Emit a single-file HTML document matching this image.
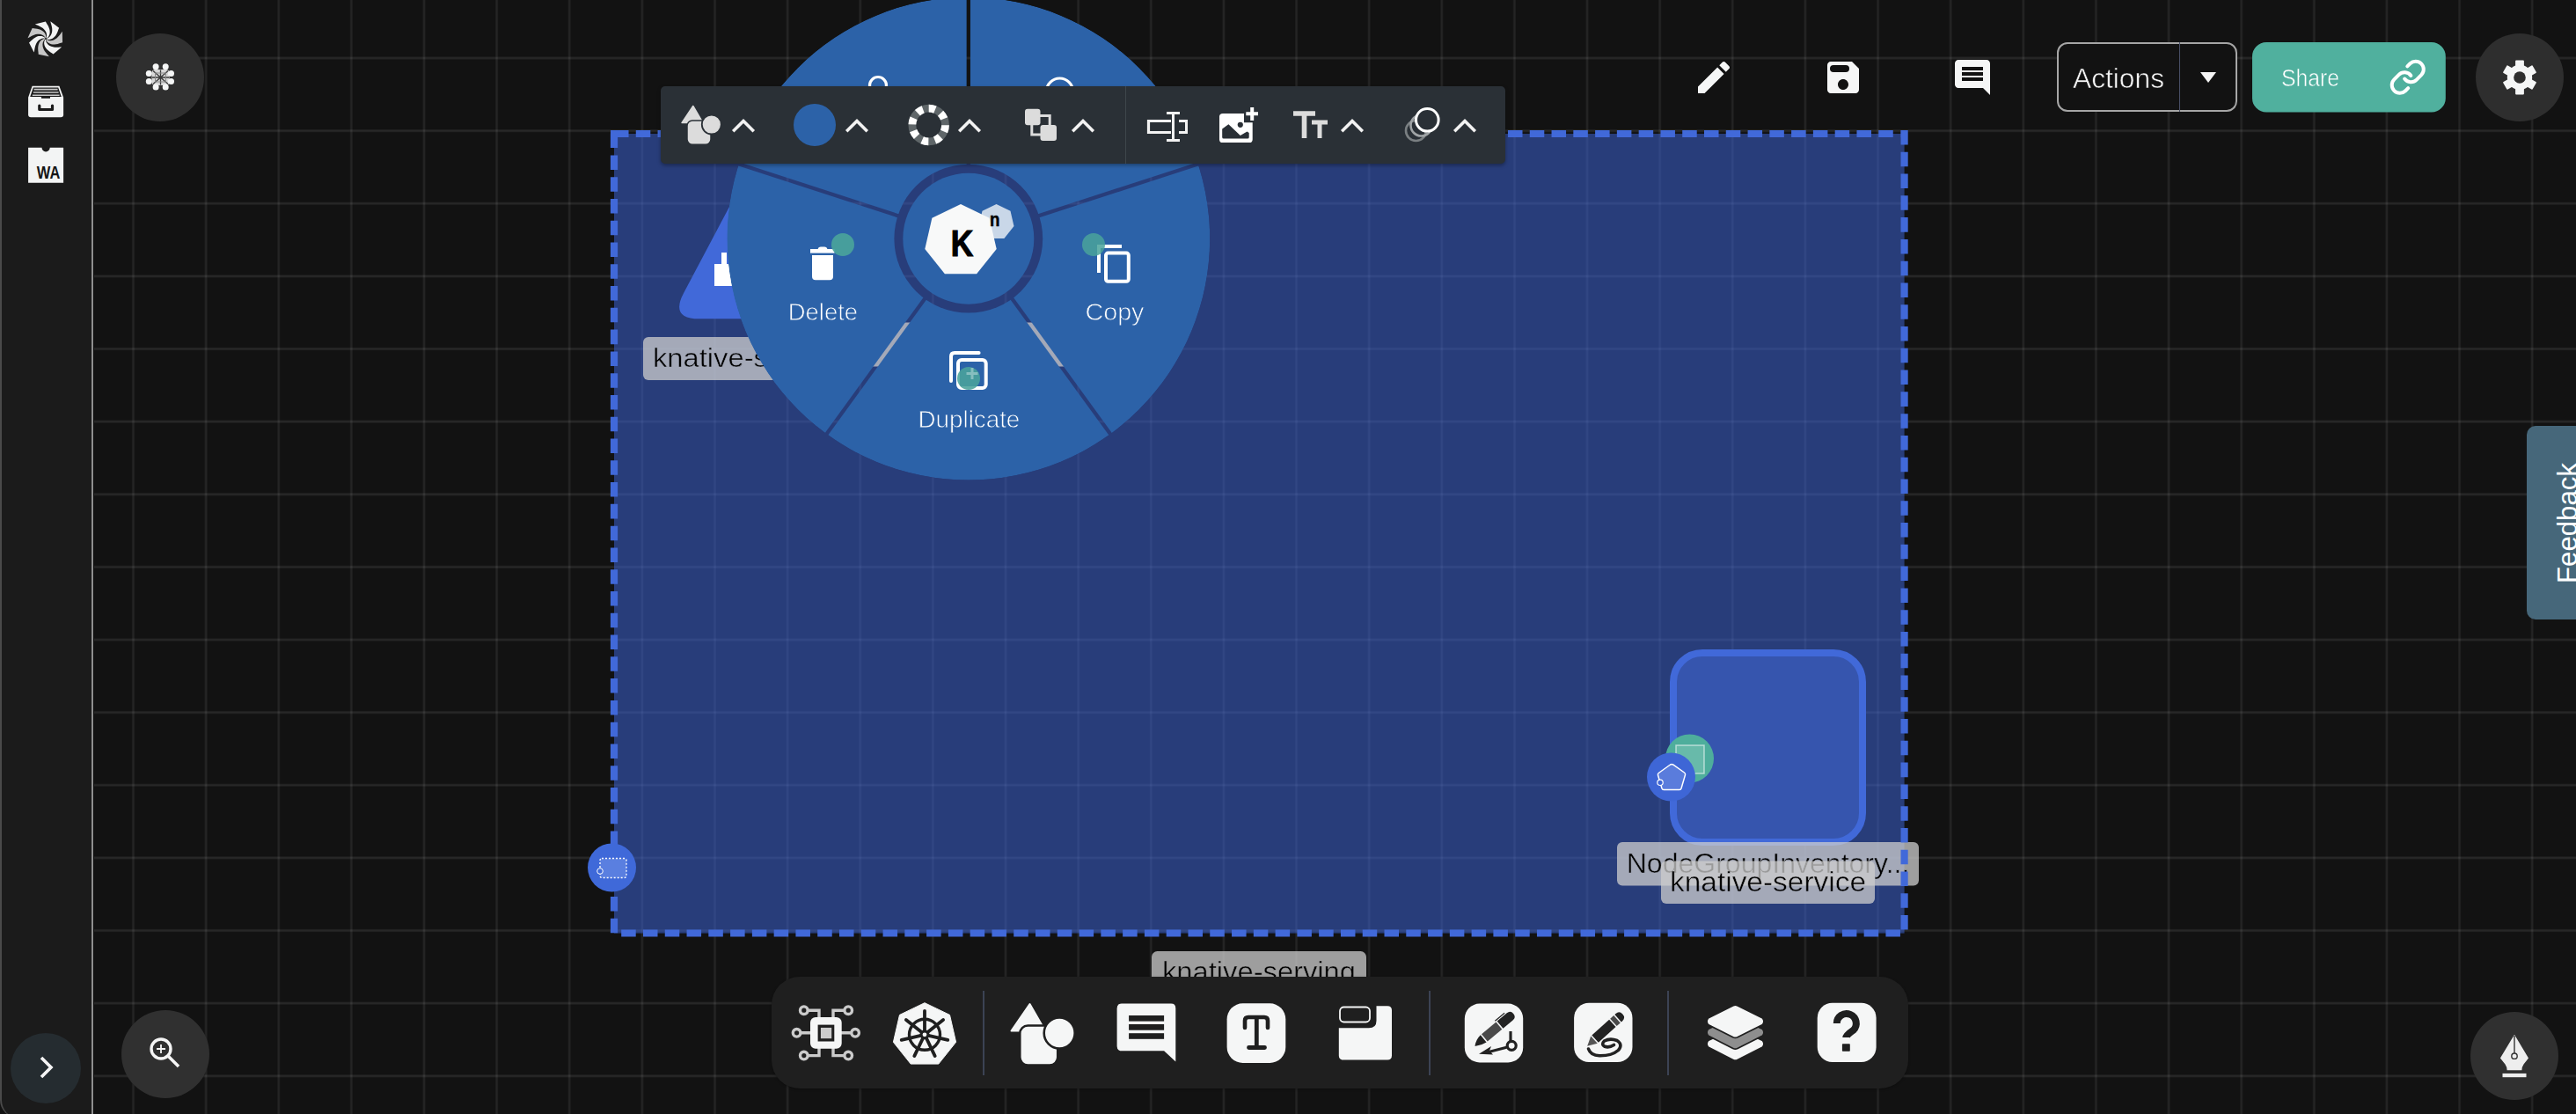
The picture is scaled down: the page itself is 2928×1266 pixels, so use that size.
<!DOCTYPE html>
<html><head><meta charset="utf-8">
<style>
html,body{margin:0;padding:0;}
body{width:2928px;height:1266px;overflow:hidden;background:#121212;position:relative;font-family:"Liberation Sans",sans-serif;}
.abs{position:absolute;}
svg{display:block;}
</style></head><body>
<svg class="abs" style="left:0;top:0" width="2928" height="1266"><g><rect x="67.17" y="0" width="3.4" height="1266" fill="rgba(255,255,255,0.045)"/><rect x="67.97" y="0" width="1.8" height="1266" fill="rgba(255,255,255,0.04)"/><rect x="149.80" y="0" width="3.4" height="1266" fill="rgba(255,255,255,0.045)"/><rect x="150.60" y="0" width="1.8" height="1266" fill="rgba(255,255,255,0.04)"/><rect x="232.42" y="0" width="3.4" height="1266" fill="rgba(255,255,255,0.045)"/><rect x="233.22" y="0" width="1.8" height="1266" fill="rgba(255,255,255,0.04)"/><rect x="315.05" y="0" width="3.4" height="1266" fill="rgba(255,255,255,0.045)"/><rect x="315.85" y="0" width="1.8" height="1266" fill="rgba(255,255,255,0.04)"/><rect x="397.68" y="0" width="3.4" height="1266" fill="rgba(255,255,255,0.045)"/><rect x="398.48" y="0" width="1.8" height="1266" fill="rgba(255,255,255,0.04)"/><rect x="480.31" y="0" width="3.4" height="1266" fill="rgba(255,255,255,0.045)"/><rect x="481.11" y="0" width="1.8" height="1266" fill="rgba(255,255,255,0.04)"/><rect x="562.93" y="0" width="3.4" height="1266" fill="rgba(255,255,255,0.045)"/><rect x="563.73" y="0" width="1.8" height="1266" fill="rgba(255,255,255,0.04)"/><rect x="645.56" y="0" width="3.4" height="1266" fill="rgba(255,255,255,0.045)"/><rect x="646.36" y="0" width="1.8" height="1266" fill="rgba(255,255,255,0.04)"/><rect x="728.19" y="0" width="3.4" height="1266" fill="rgba(255,255,255,0.045)"/><rect x="728.99" y="0" width="1.8" height="1266" fill="rgba(255,255,255,0.04)"/><rect x="810.81" y="0" width="3.4" height="1266" fill="rgba(255,255,255,0.045)"/><rect x="811.61" y="0" width="1.8" height="1266" fill="rgba(255,255,255,0.04)"/><rect x="893.44" y="0" width="3.4" height="1266" fill="rgba(255,255,255,0.045)"/><rect x="894.24" y="0" width="1.8" height="1266" fill="rgba(255,255,255,0.04)"/><rect x="976.07" y="0" width="3.4" height="1266" fill="rgba(255,255,255,0.045)"/><rect x="976.87" y="0" width="1.8" height="1266" fill="rgba(255,255,255,0.04)"/><rect x="1058.69" y="0" width="3.4" height="1266" fill="rgba(255,255,255,0.045)"/><rect x="1059.49" y="0" width="1.8" height="1266" fill="rgba(255,255,255,0.04)"/><rect x="1141.32" y="0" width="3.4" height="1266" fill="rgba(255,255,255,0.045)"/><rect x="1142.12" y="0" width="1.8" height="1266" fill="rgba(255,255,255,0.04)"/><rect x="1223.95" y="0" width="3.4" height="1266" fill="rgba(255,255,255,0.045)"/><rect x="1224.75" y="0" width="1.8" height="1266" fill="rgba(255,255,255,0.04)"/><rect x="1306.58" y="0" width="3.4" height="1266" fill="rgba(255,255,255,0.045)"/><rect x="1307.38" y="0" width="1.8" height="1266" fill="rgba(255,255,255,0.04)"/><rect x="1389.20" y="0" width="3.4" height="1266" fill="rgba(255,255,255,0.045)"/><rect x="1390.00" y="0" width="1.8" height="1266" fill="rgba(255,255,255,0.04)"/><rect x="1471.83" y="0" width="3.4" height="1266" fill="rgba(255,255,255,0.045)"/><rect x="1472.63" y="0" width="1.8" height="1266" fill="rgba(255,255,255,0.04)"/><rect x="1554.46" y="0" width="3.4" height="1266" fill="rgba(255,255,255,0.045)"/><rect x="1555.26" y="0" width="1.8" height="1266" fill="rgba(255,255,255,0.04)"/><rect x="1637.08" y="0" width="3.4" height="1266" fill="rgba(255,255,255,0.045)"/><rect x="1637.88" y="0" width="1.8" height="1266" fill="rgba(255,255,255,0.04)"/><rect x="1719.71" y="0" width="3.4" height="1266" fill="rgba(255,255,255,0.045)"/><rect x="1720.51" y="0" width="1.8" height="1266" fill="rgba(255,255,255,0.04)"/><rect x="1802.34" y="0" width="3.4" height="1266" fill="rgba(255,255,255,0.045)"/><rect x="1803.14" y="0" width="1.8" height="1266" fill="rgba(255,255,255,0.04)"/><rect x="1884.96" y="0" width="3.4" height="1266" fill="rgba(255,255,255,0.045)"/><rect x="1885.76" y="0" width="1.8" height="1266" fill="rgba(255,255,255,0.04)"/><rect x="1967.59" y="0" width="3.4" height="1266" fill="rgba(255,255,255,0.045)"/><rect x="1968.39" y="0" width="1.8" height="1266" fill="rgba(255,255,255,0.04)"/><rect x="2050.22" y="0" width="3.4" height="1266" fill="rgba(255,255,255,0.045)"/><rect x="2051.02" y="0" width="1.8" height="1266" fill="rgba(255,255,255,0.04)"/><rect x="2132.84" y="0" width="3.4" height="1266" fill="rgba(255,255,255,0.045)"/><rect x="2133.64" y="0" width="1.8" height="1266" fill="rgba(255,255,255,0.04)"/><rect x="2215.47" y="0" width="3.4" height="1266" fill="rgba(255,255,255,0.045)"/><rect x="2216.27" y="0" width="1.8" height="1266" fill="rgba(255,255,255,0.04)"/><rect x="2298.10" y="0" width="3.4" height="1266" fill="rgba(255,255,255,0.045)"/><rect x="2298.90" y="0" width="1.8" height="1266" fill="rgba(255,255,255,0.04)"/><rect x="2380.73" y="0" width="3.4" height="1266" fill="rgba(255,255,255,0.045)"/><rect x="2381.53" y="0" width="1.8" height="1266" fill="rgba(255,255,255,0.04)"/><rect x="2463.35" y="0" width="3.4" height="1266" fill="rgba(255,255,255,0.045)"/><rect x="2464.15" y="0" width="1.8" height="1266" fill="rgba(255,255,255,0.04)"/><rect x="2545.98" y="0" width="3.4" height="1266" fill="rgba(255,255,255,0.045)"/><rect x="2546.78" y="0" width="1.8" height="1266" fill="rgba(255,255,255,0.04)"/><rect x="2628.61" y="0" width="3.4" height="1266" fill="rgba(255,255,255,0.045)"/><rect x="2629.41" y="0" width="1.8" height="1266" fill="rgba(255,255,255,0.04)"/><rect x="2711.23" y="0" width="3.4" height="1266" fill="rgba(255,255,255,0.045)"/><rect x="2712.03" y="0" width="1.8" height="1266" fill="rgba(255,255,255,0.04)"/><rect x="2793.86" y="0" width="3.4" height="1266" fill="rgba(255,255,255,0.045)"/><rect x="2794.66" y="0" width="1.8" height="1266" fill="rgba(255,255,255,0.04)"/><rect x="2876.49" y="0" width="3.4" height="1266" fill="rgba(255,255,255,0.045)"/><rect x="2877.29" y="0" width="1.8" height="1266" fill="rgba(255,255,255,0.04)"/><rect x="0" y="64.30" width="2928" height="3.4" fill="rgba(255,255,255,0.05)"/><rect x="0" y="65.10" width="2928" height="1.8" fill="rgba(255,255,255,0.045)"/><rect x="0" y="146.93" width="2928" height="3.4" fill="rgba(255,255,255,0.05)"/><rect x="0" y="147.73" width="2928" height="1.8" fill="rgba(255,255,255,0.045)"/><rect x="0" y="229.55" width="2928" height="3.4" fill="rgba(255,255,255,0.05)"/><rect x="0" y="230.35" width="2928" height="1.8" fill="rgba(255,255,255,0.045)"/><rect x="0" y="312.18" width="2928" height="3.4" fill="rgba(255,255,255,0.05)"/><rect x="0" y="312.98" width="2928" height="1.8" fill="rgba(255,255,255,0.045)"/><rect x="0" y="394.81" width="2928" height="3.4" fill="rgba(255,255,255,0.05)"/><rect x="0" y="395.61" width="2928" height="1.8" fill="rgba(255,255,255,0.045)"/><rect x="0" y="477.44" width="2928" height="3.4" fill="rgba(255,255,255,0.05)"/><rect x="0" y="478.24" width="2928" height="1.8" fill="rgba(255,255,255,0.045)"/><rect x="0" y="560.06" width="2928" height="3.4" fill="rgba(255,255,255,0.05)"/><rect x="0" y="560.86" width="2928" height="1.8" fill="rgba(255,255,255,0.045)"/><rect x="0" y="642.69" width="2928" height="3.4" fill="rgba(255,255,255,0.05)"/><rect x="0" y="643.49" width="2928" height="1.8" fill="rgba(255,255,255,0.045)"/><rect x="0" y="725.32" width="2928" height="3.4" fill="rgba(255,255,255,0.05)"/><rect x="0" y="726.12" width="2928" height="1.8" fill="rgba(255,255,255,0.045)"/><rect x="0" y="807.94" width="2928" height="3.4" fill="rgba(255,255,255,0.05)"/><rect x="0" y="808.74" width="2928" height="1.8" fill="rgba(255,255,255,0.045)"/><rect x="0" y="890.57" width="2928" height="3.4" fill="rgba(255,255,255,0.05)"/><rect x="0" y="891.37" width="2928" height="1.8" fill="rgba(255,255,255,0.045)"/><rect x="0" y="973.20" width="2928" height="3.4" fill="rgba(255,255,255,0.05)"/><rect x="0" y="974.00" width="2928" height="1.8" fill="rgba(255,255,255,0.045)"/><rect x="0" y="1055.82" width="2928" height="3.4" fill="rgba(255,255,255,0.05)"/><rect x="0" y="1056.62" width="2928" height="1.8" fill="rgba(255,255,255,0.045)"/><rect x="0" y="1138.45" width="2928" height="3.4" fill="rgba(255,255,255,0.05)"/><rect x="0" y="1139.25" width="2928" height="1.8" fill="rgba(255,255,255,0.045)"/><rect x="0" y="1221.08" width="2928" height="3.4" fill="rgba(255,255,255,0.05)"/><rect x="0" y="1221.88" width="2928" height="1.8" fill="rgba(255,255,255,0.045)"/></g></svg>

<div class="abs" style="left:0;top:0;width:102px;height:1270px;background:#1b1b1b;border-left:2px solid #4a4a4a;border-right:2px solid #8f8f8f;border-bottom-left-radius:20px;box-sizing:content-box;"></div>
<div class="abs" style="left:106px;top:0;width:1px;height:1266px;background:#0c0c0c"></div>
<svg class="abs" style="left:0;top:0" width="106" height="80"><path d="M52.99,43.84 L54.52,43.27 L55.91,42.34 L57.10,41.09 L58.06,39.58 L58.75,37.86 L59.16,35.98 L59.29,34.00 L59.17,31.97 L58.82,29.94 L58.30,27.94 L57.71,26.01 L57.31,24.20 L67.15,31.73 L66.46,33.34 L65.83,35.16 L65.12,36.99 L64.25,38.75 L63.22,40.38 L62.02,41.83 L60.66,43.04 L59.17,43.99 L57.59,44.62 L55.98,44.92 L54.39,44.86 L52.89,44.45Z" fill="#f2f3f3"/><path d="M52.74,44.67 L54.14,45.52 L55.74,46.02 L57.46,46.18 L59.23,45.98 L61.01,45.45 L62.73,44.60 L64.36,43.47 L65.87,42.11 L67.24,40.56 L68.48,38.91 L69.63,37.25 L70.79,35.80 L71.04,48.20 L69.34,48.66 L67.54,49.30 L65.66,49.88 L63.75,50.31 L61.83,50.52 L59.94,50.48 L58.14,50.17 L56.48,49.59 L55.00,48.76 L53.76,47.68 L52.82,46.41 L52.20,44.98Z" fill="#c6c6c6"/><path d="M51.93,45.00 L52.15,46.62 L52.75,48.18 L53.70,49.62 L54.96,50.89 L56.49,51.95 L58.22,52.76 L60.12,53.34 L62.13,53.66 L64.19,53.77 L66.25,53.71 L68.27,53.57 L70.12,53.58 L60.59,61.51 L59.17,60.46 L57.54,59.45 L55.92,58.35 L54.39,57.12 L53.03,55.75 L51.89,54.25 L51.01,52.65 L50.42,50.99 L50.15,49.31 L50.22,47.67 L50.63,46.14 L51.36,44.77Z" fill="#f2f3f3"/><path d="M51.18,44.57 L50.05,45.75 L49.20,47.19 L48.66,48.83 L48.46,50.61 L48.58,52.46 L49.03,54.33 L49.77,56.17 L50.76,57.94 L51.96,59.62 L53.29,61.20 L54.66,62.69 L55.81,64.14 L43.67,61.63 L43.60,59.87 L43.37,57.97 L43.22,56.01 L43.24,54.05 L43.46,52.13 L43.92,50.30 L44.62,48.62 L45.55,47.12 L46.69,45.87 L48.02,44.90 L49.47,44.26 L51.00,43.98Z" fill="#c6c6c6"/><path d="M51.04,43.71 L49.41,43.56 L47.75,43.80 L46.14,44.41 L44.62,45.35 L43.25,46.61 L42.07,48.12 L41.09,49.84 L40.32,51.72 L39.76,53.71 L39.36,55.74 L39.05,57.73 L38.63,59.54 L33.02,48.48 L34.35,47.33 L35.70,45.96 L37.14,44.63 L38.68,43.42 L40.32,42.39 L42.03,41.61 L43.79,41.11 L45.54,40.90 L47.23,41.02 L48.81,41.45 L50.22,42.19 L51.39,43.21Z" fill="#f2f3f3"/><path d="M51.63,43.07 L50.73,41.70 L49.51,40.56 L48.03,39.67 L46.34,39.08 L44.51,38.79 L42.59,38.80 L40.63,39.11 L38.68,39.69 L36.78,40.48 L34.94,41.43 L33.19,42.44 L31.51,43.23 L36.66,31.96 L38.40,32.28 L40.30,32.48 L42.24,32.77 L44.15,33.22 L45.97,33.87 L47.65,34.72 L49.14,35.77 L50.39,37.02 L51.36,38.41 L52.01,39.92 L52.31,41.48 L52.24,43.03Z" fill="#c6c6c6"/><path d="M52.49,43.13 L53.00,41.57 L53.14,39.91 L52.91,38.20 L52.32,36.51 L51.41,34.89 L50.19,33.40 L48.73,32.06 L47.07,30.90 L45.26,29.90 L43.37,29.06 L41.49,28.32 L39.83,27.51 L51.85,24.50 L52.68,26.05 L53.71,27.67 L54.70,29.37 L55.53,31.14 L56.17,32.97 L56.55,34.81 L56.65,36.64 L56.46,38.39 L55.97,40.02 L55.20,41.46 L54.17,42.67 L52.91,43.58Z" fill="#f2f3f3"/></svg>
<svg class="abs" style="left:0;top:0" width="106" height="220" viewBox="0 0 106 220">
  <path d="M36.6,97.8 H67.4 L72.1,110.8 V130.3 Q72.1,133.3 69.1,133.3 H35.1 Q32.1,133.3 32.1,130.3 V110.8 Z" fill="#f3f4f4"/>
  <path d="M37.8,99.5 H66.2 L69.8,110 H34.2 Z" fill="#1b1b1b"/>
  <path d="M38.6,101.6 H65.6 M37.8,105 H66.6 M36.8,108.2 H67.6" stroke="#c8c8c8" stroke-width="1.6"/>
  <rect x="47" y="110" width="10" height="1.8" fill="#1b1b1b"/>
  <path d="M44.8,120 V124.5 H59.5 V120" fill="none" stroke="#1b1b1b" stroke-width="3.2" stroke-linecap="round" stroke-linejoin="round"/>
  <path d="M32.1,167.8 H47.5 A4.6,4.6 0 0 0 56.7,167.8 H72.1 V207.8 H32.1 Z" fill="#f3f4f4"/>
  <text x="41.8" y="202.7" font-family="Liberation Sans" font-weight="bold" font-size="19.4" fill="#151515" textLength="26.5" lengthAdjust="spacingAndGlyphs">WA</text>
</svg>
<div class="abs" style="left:132px;top:38px;width:100px;height:100px;border-radius:50%;background:#2f2f2f"></div>
<svg class="abs" style="left:0;top:0" width="240" height="140" viewBox="0 0 240 140">
  <rect x="172.5" y="79" width="20" height="18" rx="4" fill="#d8d8d8"/>
  <path d="M174,80.5 L191,95.5 M191,80.5 L174,95.5 M182.5,79.5 V96.5 M173,88 H192" stroke="#3a3a3a" stroke-width="1.3"/>
  <rect x="176.5" y="83" width="12" height="10" fill="none" stroke="#888" stroke-width="1"/>
  <g fill="#f5f6f6">
    <circle cx="177.1" cy="75.8" r="3.5"/><circle cx="188.2" cy="75.8" r="3.5"/>
    <circle cx="169.3" cy="83.4" r="3.5"/><circle cx="194.5" cy="83.4" r="3.5"/>
    <circle cx="169.3" cy="92.4" r="3.5"/><circle cx="194.5" cy="92.4" r="3.5"/>
    <circle cx="177.1" cy="98.9" r="3.5"/><circle cx="188.2" cy="98.9" r="3.5"/>
  </g>
</svg>
<div class="abs" style="left:12px;top:1174px;width:80px;height:80px;border-radius:50%;background:#252c30"></div>
<svg class="abs" style="left:40px;top:1198px" width="26" height="32" viewBox="0 0 26 32">
  <path d="M7,4 L18,15 L7,26" stroke="#f5f5f5" stroke-width="3.6" fill="none" stroke-linecap="butt"/>
</svg>
<div class="abs" style="left:138px;top:1148px;width:100px;height:100px;border-radius:50%;background:#303030"></div>
<svg class="abs" style="left:166px;top:1176px" width="44" height="44" viewBox="0 0 44 44">
  <circle cx="17" cy="16" r="11" stroke="#f5f5f5" stroke-width="3.4" fill="none"/>
  <path d="M25,24 L37,36" stroke="#f5f5f5" stroke-width="3.6" stroke-linecap="butt"/>
  <path d="M17,11 L17,21 M12,16 L22,16" stroke="#f5f5f5" stroke-width="1.8"/>
</svg>
<svg class="abs" style="left:0;top:0" width="2928" height="1266" viewBox="0 0 2928 1266" font-family="Liberation Sans">
  <!-- selection group -->
  <rect x="698" y="152" width="1466.6" height="908.6" fill="rgba(62,104,226,0.5)"/>
  <!-- triangle node -->
  <path d="M841.9,210.7 Q856.0,184.0 870.1,210.7 L934.9,332.9 Q950.5,362.3 917.3,362.3 L794.7,362.3 Q761.5,362.3 777.1,332.9 Z" fill="#4169d9"/>
  <path d="M812,300 L820,300 L820,287 L826,287 L826,300 L840,300 L840,325 L812,325 Z" fill="#ffffff"/>
  <rect x="731" y="383" width="244" height="49" rx="6" fill="rgba(205,205,205,0.75)"/>
  <mask id="20tm1" maskUnits="userSpaceOnUse" x="736.0" y="385.9" width="232.0" height="42.0"><text x="742" y="417.4" font-size="30" fill="#fff" textLength="220" lengthAdjust="spacingAndGlyphs" stroke="#000" stroke-width="0.6" font-family="Liberation Sans">knative-serving</text></mask><rect x="736.0" y="385.9" width="232.0" height="42.0" fill="#000" mask="url(#20tm1)"/>
  <!-- gray bits seen through pie gaps -->
  <rect x="985" y="366.5" width="235" height="50" fill="rgba(205,205,205,0.75)"/>
  <!-- node rect -->
  <rect x="1902" y="742" width="215" height="215" rx="33" fill="#3655ae" stroke="#4169d9" stroke-width="8"/>
  <circle cx="1920.5" cy="862" r="27.5" fill="#4eae9c"/>
  <rect x="1905" y="847" width="32" height="32" fill="rgba(255,255,255,0.15)" stroke="rgba(255,255,255,0.55)" stroke-width="1.5"/>
  <circle cx="1899.5" cy="883" r="27.5" fill="#3e66d6"/>
  <path d="M1898.5,869 Q1900.1,868 1901.7,869 L1914.5,878 Q1915.9,879 1915.5,880.6 L1911,896 Q1910.5,897.5 1909,897.5 L1891,897.5 Q1889.6,897.5 1889,896 L1884.5,881 Q1884,879.5 1885.3,878.5 Z" fill="rgba(255,255,255,0.15)" stroke="#ffffff" stroke-width="1.5"/>
  <circle cx="1887" cy="889.3" r="3.2" fill="#3e66d6" stroke="#fff" stroke-width="1.2"/>
  <rect x="1838" y="957" width="343" height="49.6" rx="6" fill="rgba(205,205,205,0.75)"/>
  <mask id="20tm2" maskUnits="userSpaceOnUse" x="1842.7" y="959.0" width="333.7" height="43.4"><text x="1848.7" y="991.5" font-size="31" fill="#fff" textLength="321.7" lengthAdjust="spacingAndGlyphs" stroke="#000" stroke-width="0.6" font-family="Liberation Sans">NodeGroupInventory...</text></mask><rect x="1842.7" y="959.0" width="333.7" height="43.4" fill="#000" mask="url(#20tm2)"/>
  <rect x="1888" y="978.5" width="243" height="48.5" rx="6" fill="rgba(205,205,205,0.75)"/>
  <mask id="20tm3" maskUnits="userSpaceOnUse" x="1892.0" y="980.0" width="235.0" height="43.4"><text x="1898" y="1012.5" font-size="31" fill="#fff" textLength="223" lengthAdjust="spacingAndGlyphs" stroke="#000" stroke-width="0.6" font-family="Liberation Sans">knative-service</text></mask><rect x="1892.0" y="980.0" width="235.0" height="43.4" fill="#000" mask="url(#20tm3)"/>
  <!-- selection border -->
  <g stroke="#4169d9" stroke-width="8.2" stroke-dasharray="16.52 8.26" fill="none">
    <path d="M698,152 H2160.3"/>
    <path d="M2164.6,148 V1060.6"/>
    <path d="M706.2,1060.5 H2160.3"/>
    <path d="M698,151.6 V1060.8"/>
  </g>
  <rect x="694" y="148" width="8" height="4" fill="#4169d9"/>
  <!-- small node on left border -->
  <circle cx="695.5" cy="986" r="27.5" fill="#3f69d9"/>
  <rect x="682" y="975.5" width="30" height="22" rx="2" fill="#5a7fe0" stroke="#fff" stroke-width="1.3" stroke-dasharray="2 2"/>
  <circle cx="682" cy="990" r="3.3" fill="#3f69d9" stroke="#fff" stroke-width="1"/>
  <!-- bottom label -->
  <rect x="1309" y="1081" width="244" height="60" rx="6.5" fill="rgba(205,205,205,0.75)"/>
  <mask id="20tm4" maskUnits="userSpaceOnUse" x="1315.0" y="1082.5" width="232.0" height="43.4"><text x="1321" y="1115" font-size="31" fill="#fff" textLength="220" lengthAdjust="spacingAndGlyphs" stroke="#000" stroke-width="0.6" font-family="Liberation Sans">knative-serving</text></mask><rect x="1315.0" y="1082.5" width="232.0" height="43.4" fill="#000" mask="url(#20tm4)"/>
</svg>

<svg class="abs" style="left:0;top:0" width="2928" height="1266" viewBox="0 0 2928 1266" font-family="Liberation Sans">
  <defs>
    <mask id="piemask" maskUnits="userSpaceOnUse" x="0" y="0" width="2928" height="1266">
      <circle cx="1100.8" cy="271.2" r="274.4" fill="#fff"/>
      <circle cx="1100.8" cy="271.2" r="84.4" fill="#000"/>
      <line x1="1100.8" y1="271.2" x2="1100.8" y2="-28.8" stroke="#000" stroke-width="4.3"/><line x1="1100.8" y1="271.2" x2="815.5" y2="178.5" stroke="#000" stroke-width="4.3"/><line x1="1100.8" y1="271.2" x2="924.5" y2="513.9" stroke="#000" stroke-width="4.3"/><line x1="1100.8" y1="271.2" x2="1277.1" y2="513.9" stroke="#000" stroke-width="4.3"/><line x1="1100.8" y1="271.2" x2="1386.1" y2="178.5" stroke="#000" stroke-width="4.3"/>
    </mask>
  </defs>
  <circle cx="1100.8" cy="271.2" r="274.4" fill="#2c62a8" mask="url(#piemask)"/>
  <circle cx="1100.8" cy="271.2" r="74.5" fill="#2c62a8"/>
  <!-- top partial icons -->
  <circle cx="998" cy="97" r="9.5" fill="none" stroke="#fff" stroke-width="3.2"/>
  <circle cx="1204.5" cy="104" r="15" fill="none" stroke="#fff" stroke-width="3.2"/>
  <!-- center icon -->
  <polygon points="1132.5,232.0 1148.5,239.7 1152.5,257.1 1141.4,271.0 1123.6,271.0 1112.5,257.1 1116.5,239.7" fill="#c9d7e8"/>
  <polygon points="1092.0,232.0 1124.6,247.7 1132.7,283.0 1110.1,311.3 1073.9,311.3 1051.3,283.0 1059.4,247.7" fill="#f8f9f9"/>
  <text x="1093.4" y="290.8" font-size="43" font-weight="bold" text-anchor="middle" fill="#000" stroke="#000" stroke-width="1.2" transform="translate(1093.4 0) scale(0.82 1) translate(-1093.4 0)">K</text>
  <text x="1130.7" y="257.4" font-size="22" font-weight="bold" text-anchor="middle" fill="#000" stroke="#000" stroke-width="0.5" transform="translate(1130.7 0) scale(0.85 1) translate(-1130.7 0)">n</text>
  <!-- delete -->
  <path d="M929.5,283.5 Q930,280.5 933,280.5 L937,280.5 Q940,280.5 940.5,283.5 Z" fill="#fff"/>
  <rect x="921" y="283" width="27.6" height="4.6" fill="#fff"/>
  <path d="M923,290 H947 V314 Q947,318.3 943,318.3 H927 Q923,318.3 923,314 Z" fill="#fff"/>
  <circle cx="958" cy="278" r="13" fill="#4aa39b" fill-opacity="0.92"/>
  <mask id="30tm5" maskUnits="userSpaceOnUse" x="889.8" y="334.9" width="91.3" height="39.2"><text x="895.8" y="364.3" font-size="28" fill="#fff" textLength="79.3" lengthAdjust="spacingAndGlyphs" stroke="#000" stroke-width="0.8" font-family="Liberation Sans">Delete</text></mask><rect x="889.8" y="334.9" width="91.3" height="39.2" fill="#fff" mask="url(#30tm5)"/>
  <!-- copy -->
  <path d="M1249,310 V280 H1275" fill="none" stroke="#fff" stroke-width="4"/>
  <rect x="1257" y="287.6" width="25.8" height="32.2" rx="2.5" fill="none" stroke="#fff" stroke-width="4"/>
  <circle cx="1243" cy="278" r="13" fill="#4aa39b" fill-opacity="0.85"/>
  <mask id="30tm6" maskUnits="userSpaceOnUse" x="1227.4" y="334.8" width="79.1" height="39.2"><text x="1233.4" y="364.2" font-size="28" fill="#fff" textLength="67.1" lengthAdjust="spacingAndGlyphs" stroke="#000" stroke-width="0.8" font-family="Liberation Sans">Copy</text></mask><rect x="1227.4" y="334.8" width="79.1" height="39.2" fill="#fff" mask="url(#30tm6)"/>
  <!-- duplicate -->
  <path d="M1081,433 V405 Q1081,401 1085,401 H1112.6" fill="none" stroke="#fff" stroke-width="4" stroke-linecap="round"/>
  <rect x="1089" y="409" width="31.7" height="32" rx="4" fill="none" stroke="#fff" stroke-width="4"/>
  <circle cx="1101" cy="430" r="13" fill="#4aa39b" fill-opacity="0.88"/>
  <path d="M1105,418 V431 M1098.5,424.5 H1111.5" stroke="rgba(255,255,255,0.35)" stroke-width="3"/>
  <mask id="30tm7" maskUnits="userSpaceOnUse" x="1037.5" y="456.1" width="127.8" height="39.2"><text x="1043.5" y="485.5" font-size="28" fill="#fff" textLength="115.8" lengthAdjust="spacingAndGlyphs" stroke="#000" stroke-width="0.8" font-family="Liberation Sans">Duplicate</text></mask><rect x="1037.5" y="456.1" width="127.8" height="39.2" fill="#fff" mask="url(#30tm7)"/>
</svg>

<div class="abs" style="left:751px;top:98px;width:960px;height:88px;background:#2a3036;border-radius:5px;box-shadow:0 2px 4px rgba(0,0,0,0.35)"></div>
<div class="abs" style="left:1278.5px;top:98px;width:1.5px;height:88px;background:#3e464b"></div>
<svg class="abs" style="left:0;top:0" width="2928" height="1266" viewBox="0 0 2928 1266">
  <!-- shapes icon -->
  <path d="M787.8,120.5 L799,139.6 L775,139.6 Z" fill="#dcdcdc" stroke="#dcdcdc" stroke-width="1.5" stroke-linejoin="round"/>
  <rect x="781" y="137" width="27" height="27.3" rx="6" fill="#dcdcdc" stroke="#2a3036" stroke-width="1.5"/>
  <circle cx="808.8" cy="141.5" r="11" fill="#dcdcdc" stroke="#2a3036" stroke-width="1.8"/>
  <path d="M834.5,148 L845,137.5 L855.5,148" fill="none" stroke="#f2f2f2" stroke-width="3.6" stroke-linecap="square"/>
  <circle cx="926" cy="142" r="24" fill="#2c62a8"/>
  <path d="M963.5,148 L974,137.5 L984.5,148" fill="none" stroke="#f2f2f2" stroke-width="3.6" stroke-linecap="square"/>
  <circle cx="1055.7" cy="142" r="18.8" fill="none" stroke="#5f6669" stroke-width="8.8"/>
  <circle cx="1055.7" cy="142" r="18.8" fill="none" stroke="#ffffff" stroke-width="8.8" stroke-dasharray="7.383 7.383" transform="rotate(-90 1055.7 142)"/>
  <path d="M1091.5,148 L1102,137.5 L1112.5,148" fill="none" stroke="#f2f2f2" stroke-width="3.6" stroke-linecap="square"/>
  <rect x="1165" y="123.7" width="17.5" height="18.5" rx="3" fill="#dcdcdc"/>
  <rect x="1172.8" y="131.5" width="20.4" height="21.5" fill="none" stroke="#dcdcdc" stroke-width="3"/>
  <rect x="1182.5" y="142" width="18.5" height="18" rx="3" fill="#dcdcdc"/>
  <path d="M1220.5,148 L1231,137.5 L1241.5,148" fill="none" stroke="#f2f2f2" stroke-width="3.6" stroke-linecap="square"/>
  <!-- text box icon -->
  <path d="M1331,137.5 H1305.5 V150.5 H1331" fill="none" stroke="#f2f2f2" stroke-width="3.2"/>
  <path d="M1333.5,128.5 V159.5 M1326,128.5 H1341 M1326,159.5 H1341" fill="none" stroke="#f2f2f2" stroke-width="3"/>
  <path d="M1340,137.5 H1348.5 V150.5 H1340" fill="none" stroke="#f2f2f2" stroke-width="3"/>
  <!-- image add -->
  <path d="M1390,129 H1414 V139.3 H1423.7 V158.4 Q1423.7,162 1420,162 H1389.6 Q1386,162 1386,158.4 V132.6 Q1386,129 1390,129 Z" fill="#ffffff"/>
  <path d="M1389.2,146.5 L1396.4,141.3 L1409.8,153.9 L1417.5,149.4 L1419.7,151 V156 Q1419.7,157.5 1418,157.5 H1391 Q1389.2,157.5 1389.2,156 Z" fill="#2a3036"/>
  <circle cx="1409.8" cy="141.8" r="3.1" fill="#2a3036"/>
  <path d="M1423.2,122 V137 M1416.3,129.2 H1430" stroke="#ffffff" stroke-width="4"/>
  <!-- Tt -->
  <path d="M1470,129 H1495 M1482.5,129 V157" stroke="#dcdcdc" stroke-width="5.6"/>
  <path d="M1491,139 H1509 M1500,139 V157" stroke="#dcdcdc" stroke-width="5"/>
  <path d="M1526.5,148 L1537,137.5 L1547.5,148" fill="none" stroke="#f2f2f2" stroke-width="3.6" stroke-linecap="square"/>
  <!-- circles -->
  <circle cx="1609.5" cy="148.5" r="11.5" fill="none" stroke="#7a7f82" stroke-width="2.6"/>
  <circle cx="1615.5" cy="142.5" r="12" fill="none" stroke="#9fa3a5" stroke-width="2.6"/>
  <circle cx="1622.3" cy="136.3" r="12.8" fill="#2a3036" stroke="#ffffff" stroke-width="3"/>
  <path d="M1654.5,148 L1665,137.5 L1675.5,148" fill="none" stroke="#f2f2f2" stroke-width="3.6" stroke-linecap="square"/>
</svg>

<svg class="abs" style="left:1924px;top:64px" width="48" height="48" viewBox="0 0 24 24"><path fill="#f5f6f6" d="M3 17.25V21h3.75L17.81 9.94l-3.75-3.75L3 17.25zM20.71 7.04c.39-.39.39-1.02 0-1.41l-2.34-2.34c-.39-.39-1.02-.39-1.41 0l-1.83 1.83 3.75 3.75 1.83-1.83z"/></svg>
<svg class="abs" style="left:2071px;top:64px" width="48" height="48" viewBox="0 0 24 24"><path fill="#f5f6f6" d="M17 3H5c-1.11 0-2 .9-2 2v14c0 1.1.89 2 2 2h14c1.1 0 2-.9 2-2V7l-4-4zm-5 16c-1.66 0-3-1.34-3-3s1.34-3 3-3 3 1.34 3 3-1.34 3-3 3zM13.5 9h-7a1.5 1.5 0 0 1 0-4h7a1.5 1.5 0 0 1 0 4z" fill-rule="evenodd"/></svg>
<svg class="abs" style="left:2218px;top:64px" width="48" height="48" viewBox="0 0 24 24"><path fill="#f5f6f6" d="M21.99 4c0-1.1-.89-2-1.99-2H4c-1.1 0-2 .9-2 2v12c0 1.1.9 2 2 2h14l4 4-.01-18zM18 14H6v-2h12v2zm0-3H6V9h12v2zm0-3H6V6h12v2z"/></svg>
<div class="abs" style="left:2338.2px;top:48.2px;width:204.4px;height:79.3px;box-sizing:border-box;border:2px solid #a6a6a6;border-radius:12px;background:#121212"></div>
<div class="abs" style="left:2476.9px;top:48.2px;width:1.6px;height:79.3px;background:#4a5068"></div>
<svg class="abs" style="left:0;top:0" width="2928" height="1266" viewBox="0 0 2928 1266" font-family="Liberation Sans">
  <mask id="50tm8" maskUnits="userSpaceOnUse" x="2350.0" y="66.0" width="116.0" height="44.8"><text x="2356" y="99.6" font-size="32" fill="#fff" textLength="104" lengthAdjust="spacingAndGlyphs" stroke="#000" stroke-width="0.6" font-family="Liberation Sans">Actions</text></mask><rect x="2350.0" y="66.0" width="116.0" height="44.8" fill="#f5f5f5" mask="url(#50tm8)"/>
  <path d="M2501,82 H2519 L2510,94 Z" fill="#f5f5f5"/>
  <rect x="2560" y="48" width="219.8" height="79.5" rx="16" fill="#50b09e"/>
  <mask id="50tm9" maskUnits="userSpaceOnUse" x="2587.0" y="69.0" width="78.0" height="39.2"><text x="2593" y="98.4" font-size="28" fill="#fff" textLength="66" lengthAdjust="spacingAndGlyphs" stroke="#000" stroke-width="0.6" font-family="Liberation Sans">Share</text></mask><rect x="2587.0" y="69.0" width="78.0" height="39.2" fill="#ffffff" mask="url(#50tm9)"/>
  <circle cx="2864" cy="88" r="50" fill="#2e2e2e"/>
  <g fill="#f5f6f6"><rect x="2859.1" y="68.6" width="9.8" height="10" rx="1" transform="rotate(0 2864 88)"/><rect x="2859.1" y="68.6" width="9.8" height="10" rx="1" transform="rotate(60 2864 88)"/><rect x="2859.1" y="68.6" width="9.8" height="10" rx="1" transform="rotate(120 2864 88)"/><rect x="2859.1" y="68.6" width="9.8" height="10" rx="1" transform="rotate(180 2864 88)"/><rect x="2859.1" y="68.6" width="9.8" height="10" rx="1" transform="rotate(240 2864 88)"/><rect x="2859.1" y="68.6" width="9.8" height="10" rx="1" transform="rotate(300 2864 88)"/><circle cx="2864" cy="88" r="14.2"/></g><circle cx="2864" cy="88" r="6.8" fill="#2e2e2e"/>
</svg>
<svg class="abs" style="left:2714.5px;top:66px" width="43.5" height="43.5" viewBox="0 0 24 24"><g fill="none" stroke="#ffffff" stroke-width="2.2" stroke-linecap="round" stroke-linejoin="round"><path d="M10 13a5 5 0 0 0 7.54.54l3-3a5 5 0 0 0-7.07-7.07l-1.72 1.71"/><path d="M14 11a5 5 0 0 0-7.54-.54l-3 3a5 5 0 0 0 7.07 7.07l1.71-1.71"/></g></svg>
<div class="abs" style="left:2871.5px;top:484.4px;width:80px;height:220.1px;background:#46677a;border-radius:10px"></div>
<svg class="abs" style="left:2860px;top:470px" width="68" height="250" viewBox="2860 470 68 250" font-family="Liberation Sans">
  <text x="0" y="0" font-size="31" fill="#ffffff" transform="translate(2929 663) rotate(-90)" textLength="137" lengthAdjust="spacingAndGlyphs">Feedback</text>
</svg>
<div class="abs" style="left:2808px;top:1150px;width:100px;height:100px;border-radius:50%;background:#303030"></div>
<svg class="abs" style="left:0;top:0" width="2928" height="1266" viewBox="0 0 2928 1266">
  <path d="M2858,1175.7 L2874,1202.6 L2868.5,1209.5 Q2866.4,1212.5 2866.4,1216.3 L2849.6,1216.3 Q2849.6,1212.5 2847.5,1209.5 L2841.9,1202.6 Z" fill="#eeeeee"/>
  <path d="M2858,1177 V1197" stroke="#323232" stroke-width="1.4"/>
  <circle cx="2858" cy="1200.2" r="3.2" fill="#eeeeee" stroke="#323232" stroke-width="1.4"/>
  <rect x="2844.5" y="1219.9" width="27" height="4.3" fill="#eeeeee"/>
</svg>

<div class="abs" style="left:877.3px;top:1110.3px;width:1291.5px;height:127.2px;background:#1f1f1f;border-radius:32px;box-shadow:0 1px 3px rgba(0,0,0,0.3)"></div>
<div class="abs" style="left:1116.9px;top:1126px;width:1.8px;height:96px;background:#3c4354"></div>
<div class="abs" style="left:1624px;top:1126px;width:1.8px;height:96px;background:#3c4354"></div>
<div class="abs" style="left:1895px;top:1126px;width:1.8px;height:96px;background:#3c4354"></div>
<svg class="abs" style="left:0;top:0" width="2928" height="1266" viewBox="0 0 2928 1266">
<path d="M918,1148.2 H931 V1157 M960,1148.2 H947 V1157 M918,1199.6 H931 V1191 M960,1199.6 H947 V1191 M910,1173.8 H922 M968,1173.8 H956" fill="none" stroke="#cbcbcb" stroke-width="3.4"/><circle cx="913.8" cy="1148.2" r="4.3" fill="none" stroke="#cbcbcb" stroke-width="3.4"/><circle cx="964.2" cy="1148.2" r="4.3" fill="none" stroke="#cbcbcb" stroke-width="3.4"/><circle cx="905.6" cy="1173.8" r="4.3" fill="none" stroke="#cbcbcb" stroke-width="3.4"/><circle cx="972.1" cy="1173.8" r="4.3" fill="none" stroke="#cbcbcb" stroke-width="3.4"/><circle cx="913.8" cy="1199.6" r="4.3" fill="none" stroke="#cbcbcb" stroke-width="3.4"/><circle cx="964.2" cy="1199.6" r="4.3" fill="none" stroke="#cbcbcb" stroke-width="3.4"/><rect x="921" y="1156" width="35.7" height="35.8" rx="6" fill="#f5f6f6"/><rect x="929.6" y="1164.6" width="18.7" height="18.9" fill="#1f1f1f"/><rect x="932.9" y="1167.9" width="12.3" height="12.3" fill="#cccccc"/>
<polygon points="1051.0,1139.7 1079.5,1153.4 1086.6,1184.3 1066.8,1209.1 1035.2,1209.1 1015.4,1184.3 1022.5,1153.4" fill="#f5f6f6" stroke="#f5f6f6" stroke-width="1" stroke-linejoin="round"/><circle cx="1051" cy="1175.8" r="17.5" fill="none" stroke="#1f1f1f" stroke-width="3.4"/><line x1="1051" y1="1175.8" x2="1051.0" y2="1148.8" stroke="#1f1f1f" stroke-width="3.8" stroke-linecap="round"/><line x1="1051" y1="1175.8" x2="1072.1" y2="1159.0" stroke="#1f1f1f" stroke-width="3.8" stroke-linecap="round"/><line x1="1051" y1="1175.8" x2="1077.3" y2="1181.8" stroke="#1f1f1f" stroke-width="3.8" stroke-linecap="round"/><line x1="1051" y1="1175.8" x2="1062.7" y2="1200.1" stroke="#1f1f1f" stroke-width="3.8" stroke-linecap="round"/><line x1="1051" y1="1175.8" x2="1039.3" y2="1200.1" stroke="#1f1f1f" stroke-width="3.8" stroke-linecap="round"/><line x1="1051" y1="1175.8" x2="1024.7" y2="1181.8" stroke="#1f1f1f" stroke-width="3.8" stroke-linecap="round"/><line x1="1051" y1="1175.8" x2="1029.9" y2="1159.0" stroke="#1f1f1f" stroke-width="3.8" stroke-linecap="round"/><circle cx="1051" cy="1175.8" r="5.5" fill="#1f1f1f"/><circle cx="1051" cy="1175.8" r="2.4" fill="#f5f6f6"/>
<path d="M1170.5,1141 L1188,1171.6 L1149.5,1171.6 Z" fill="#f5f6f6" stroke="#f5f6f6" stroke-width="2" stroke-linejoin="round"/>
<rect x="1159.3" y="1165.6" width="42.9" height="44.9" rx="9" fill="#f5f6f6" stroke="#1f1f1f" stroke-width="2.5"/>
<circle cx="1204.2" cy="1174" r="17.5" fill="#f5f6f6" stroke="#1f1f1f" stroke-width="2.6"/>
<path d="M1275,1140.6 H1331 Q1336.3,1140.6 1336.3,1146 V1206.6 L1323.1,1194.3 H1275 Q1269.6,1194.3 1269.6,1189 V1146 Q1269.6,1140.6 1275,1140.6 Z" fill="#f5f6f6"/>
<rect x="1283.1" y="1154" width="40" height="6.6" fill="#1f1f1f"/><rect x="1283.1" y="1164" width="40" height="6.7" fill="#1f1f1f"/><rect x="1283.1" y="1174.2" width="40" height="6.6" fill="#1f1f1f"/>
<rect x="1394.6" y="1140.3" width="66.7" height="67.6" rx="18" fill="#f5f6f6"/>
<path d="M1415,1168 V1160 Q1415,1156 1419,1156 H1437 Q1441,1156 1441,1160 V1168" fill="none" stroke="#1f1f1f" stroke-width="4.6" stroke-linecap="round"/>
<path d="M1428.3,1157 V1190.5 M1419.5,1190.5 H1437.5" fill="none" stroke="#1f1f1f" stroke-width="4.8" stroke-linecap="round"/>
<path d="M1564.5,1143.2 H1577 Q1582,1143.2 1582,1148 V1199.6 Q1582,1204.6 1577,1204.6 H1527 Q1521.8,1204.6 1521.8,1199.6 V1168.3 H1556 Q1564.5,1168.3 1564.5,1160 Z" fill="#f5f6f6"/>
<rect x="1523" y="1144.5" width="34" height="17" rx="4.5" fill="none" stroke="#f5f6f6" stroke-width="1.8"/>
<rect x="1664.8" y="1140.6" width="66.4" height="66.8" rx="17" fill="#f5f6f6"/>
<g transform="translate(1676.2 1188.7) rotate(-39.8)">
  <path d="M0,0.5 Q5,-4.5 13,-5.3 L13,5.3 Q7,4.5 0,0.5 Z" fill="#222"/>
  <rect x="14.6" y="-5.3" width="21.4" height="10.6" fill="#4a4a4a"/>
  <path d="M37.6,-5.3 H52 Q57.3,-5.3 57.3,0 Q57.3,5.3 52,5.3 H37.6 Z" fill="#222"/>
  <path d="M36,-7 L50,-7" stroke="#222" stroke-width="1.2"/>
</g>
<circle cx="1718.2" cy="1188.3" r="5" fill="none" stroke="#222" stroke-width="3.2"/>
<path d="M1717,1172 V1183" stroke="#222" stroke-width="3.2"/>
<path d="M1712.5,1190.2 L1693,1195.3" stroke="#222" stroke-width="3"/>
<path d="M1681,1197.7 L1695,1189 L1693,1194 L1697,1198.6 Z" fill="#222"/>
<rect x="1789.1" y="1139.8" width="66.4" height="67.2" rx="17" fill="#f5f6f6"/>
<g transform="translate(1804.2 1188.7) rotate(-42)">
  <path d="M0,0 L10.5,-5.6 V5.6 Z" fill="#555"/>
  <rect x="12" y="-5.6" width="26.5" height="11.2" fill="#222"/>
  <rect x="40" y="-5.6" width="5.5" height="11.2" fill="#4a4a4a"/>
  <path d="M47,-5.6 H48.5 Q54,-5.6 54,0 Q54,5.6 48.5,5.6 H47 Z" fill="#222"/>
</g>
<path d="M1805.5,1192 Q1808,1199.5 1818,1199.8 Q1832,1200 1839.5,1193.5 Q1845,1187 1838,1182.5 Q1830,1179.5 1823.5,1183 Q1819.5,1187 1824,1189.3 Q1829,1191 1834.5,1187.5" fill="none" stroke="#222" stroke-width="3.6" stroke-linecap="round"/>
<path d="M1972.4,1168 L2003.5,1182.5 Q2006.5,1186.5 2003.5,1190 L1975,1204.5 Q1972.4,1205.8 1969.8,1204.5 L1941.5,1190 Q1938.5,1186.5 1941.5,1182.5 Z" fill="#f5f6f6" stroke="#1f1f1f" stroke-width="1.8"/>
<path d="M1972.4,1155 L2003.5,1169.5 Q2006.5,1173.5 2003.5,1177 L1975,1191.5 Q1972.4,1192.8 1969.8,1191.5 L1941.5,1177 Q1938.5,1173.5 1941.5,1169.5 Z" fill="#8e8e8e" stroke="#1f1f1f" stroke-width="1.8"/>
<path d="M1970,1142.6 Q1972.4,1141.5 1974.8,1142.6 L2003.5,1157 Q2006.5,1161 2003.5,1164.5 L1975,1178.8 Q1972.4,1180 1969.8,1178.8 L1941.5,1164.5 Q1938.5,1161 1941.5,1157 Z" fill="#f5f6f6" stroke="#1f1f1f" stroke-width="1.8"/>
<rect x="2065.7" y="1139.8" width="66.9" height="67.2" rx="17" fill="#f5f6f6"/>
<path d="M2087.8,1163 A11,11 0 1 1 2106.6,1170.8 Q2098.3,1176.5 2098.3,1179" fill="none" stroke="#1f1f1f" stroke-width="8"/>
<rect x="2093.9" y="1186.2" width="8.9" height="8.6" rx="0.8" fill="#1f1f1f"/>
</svg>

</body></html>
